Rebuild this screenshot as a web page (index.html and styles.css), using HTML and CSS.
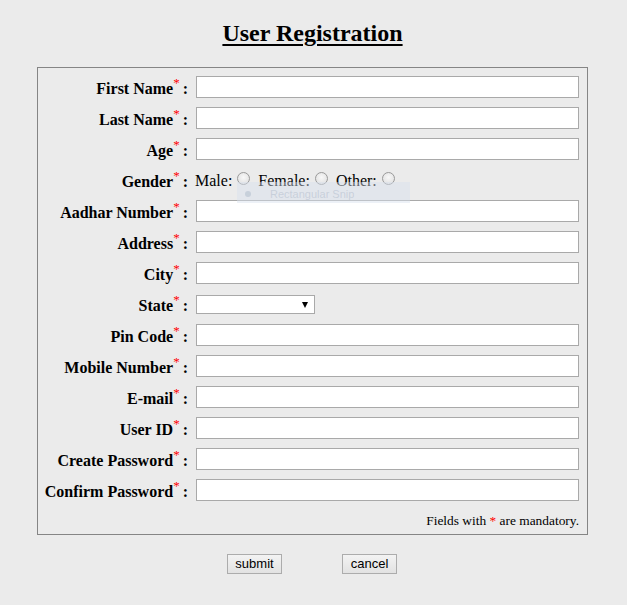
FILE: index.html
```html
<!DOCTYPE html>
<html>
<head>
<meta charset="utf-8">
<title>User Registration</title>
<link rel="stylesheet" href="styles.css">
</head>
<body>
<h1 class="title">User Registration</h1>
<form class="reg-box">
  <div class="reg-grid">
    <label class="lbl">First Name<sup class="req">*</sup><span class="colon">:</span></label><input class="field" type="text">
    <label class="lbl">Last Name<sup class="req">*</sup><span class="colon">:</span></label><input class="field" type="text">
    <label class="lbl">Age<sup class="req">*</sup><span class="colon">:</span></label><input class="field" type="text">
    <label class="lbl">Gender<sup class="req">*</sup><span class="colon">:</span></label>
    <div class="gender">
      <span class="opt">Male:</span><span class="radio"></span>
      <span class="opt">Female:</span><span class="radio"></span>
      <span class="opt">Other:</span><span class="radio"></span>
    </div>
    <label class="lbl">Aadhar Number<sup class="req">*</sup><span class="colon">:</span></label><input class="field" type="text">
    <label class="lbl">Address<sup class="req">*</sup><span class="colon">:</span></label><input class="field" type="text">
    <label class="lbl">City<sup class="req">*</sup><span class="colon">:</span></label><input class="field" type="text">
    <label class="lbl">State<sup class="req">*</sup><span class="colon">:</span></label>
    <div class="select-wrap"><span class="select"></span></div>
    <label class="lbl">Pin Code<sup class="req">*</sup><span class="colon">:</span></label><input class="field" type="text">
    <label class="lbl">Mobile Number<sup class="req">*</sup><span class="colon">:</span></label><input class="field" type="text">
    <label class="lbl">E-mail<sup class="req">*</sup><span class="colon">:</span></label><input class="field" type="text">
    <label class="lbl">User ID<sup class="req">*</sup><span class="colon">:</span></label><input class="field" type="text">
    <label class="lbl">Create Password<sup class="req">*</sup><span class="colon">:</span></label><input class="field" type="password">
    <label class="lbl">Confirm Password<sup class="req">*</sup><span class="colon">:</span></label><input class="field" type="password">
  </div>
  <p class="note">Fields with <span class="req-note">*</span> are mandatory.</p>
  <div class="snip"><span class="snip-dot"></span><span class="snip-text">Rectangular Snip</span></div>
</form>
<div class="actions">
  <button class="btn" type="button">submit</button>
  <button class="btn" type="button">cancel</button>
</div>
</body>
</html>
```
FILE: styles.css
```css
html, body {
  margin: 0;
  padding: 0;
  background: #ebebeb;
}
body {
  font-family: "Liberation Serif", "Times New Roman", serif;
  color: #000;
  padding-top: 19px;
}
.title {
  margin: 0;
  text-align: center;
  font-size: 24px;
  line-height: 28px;
  font-weight: bold;
  text-decoration: underline;
  text-decoration-thickness: 2px;
  text-underline-offset: 3px;
  padding-right: 2px;
}
.reg-box {
  position: relative;
  box-sizing: border-box;
  width: 551px;
  margin: 20px 0 0 37px;
  border: 1px solid #858585;
  padding: 8px 8px 6px 0;
}
.reg-grid {
  display: grid;
  grid-template-columns: 150px 383px;
  grid-auto-rows: 22px;
  column-gap: 8px;
  row-gap: 9px;
}
.lbl {
  display: flex;
  align-items: center;
  justify-content: flex-end;
  font-size: 16px;
  font-weight: bold;
  white-space: pre;
  padding-top: 4px;
}
.req {
  color: #ff0000;
  font-size: 13px;
  font-weight: normal;
  position: relative;
  top: -6px;
  line-height: 0;
  vertical-align: baseline;
}
.colon {
  margin-left: 3px;
}
.field {
  box-sizing: border-box;
  width: 383px;
  height: 22px;
  margin: 0;
  border: 1px solid #a9a9a9;
  background: #fff;
  padding: 1px 2px;
  font: 13px "Liberation Sans", Arial, sans-serif;
}
.gender {
  display: flex;
  align-items: center;
  font-size: 16px;
  margin-left: -1px;
  padding-top: 2px;
}
.opt {
  line-height: 18px;
}
.radio {
  box-sizing: border-box;
  width: 13px;
  height: 13px;
  border-radius: 50%;
  border: 1px solid #9a9a9a;
  background: radial-gradient(circle at 50% 40%, #f8f8f8 0%, #e2e2e2 80%);
  margin: -5px 8px 0 5px;
}
.select-wrap {
  display: flex;
  align-items: center;
}
.select {
  position: relative;
  box-sizing: border-box;
  width: 119px;
  height: 19px;
  border: 1px solid #a9a9a9;
  background: #fff;
}
.select::after {
  content: "";
  position: absolute;
  right: 6px;
  top: 6px;
  width: 0;
  height: 0;
  border-left: 3.5px solid transparent;
  border-right: 3.5px solid transparent;
  border-top: 6px solid #000;
}
.note {
  margin: 12px 0 0;
  text-align: right;
  font-size: 13.4px;
  line-height: 15px;
}
.req-note {
  color: #ff0000;
}
.snip {
  position: absolute;
  left: 199px;
  top: 114px;
  width: 173px;
  height: 21px;
  background: rgba(214, 225, 238, 0.45);
  display: flex;
  align-items: flex-end;
  pointer-events: none;
}
.snip-dot {
  width: 6px;
  height: 6px;
  border-radius: 50%;
  background: rgba(150, 165, 185, 0.35);
  margin: 0 19px 6px 8px;
}
.snip-text {
  color: rgba(150, 165, 185, 0.35);
  font: 11px "Liberation Sans", Arial, sans-serif;
  line-height: 13px;
  padding-bottom: 2px;
}
.actions {
  display: flex;
  justify-content: center;
  gap: 60px;
  margin-top: 19px;
  padding-right: 3px;
}
.btn {
  box-sizing: border-box;
  width: 55px;
  height: 20px;
  padding: 0;
  border: 1px solid #acacac;
  border-radius: 0;
  background: linear-gradient(#f3f3f3, #e2e2e2);
  font: 13px "Liberation Sans", Arial, sans-serif;
  color: #000;
  line-height: 18px;
}
```
